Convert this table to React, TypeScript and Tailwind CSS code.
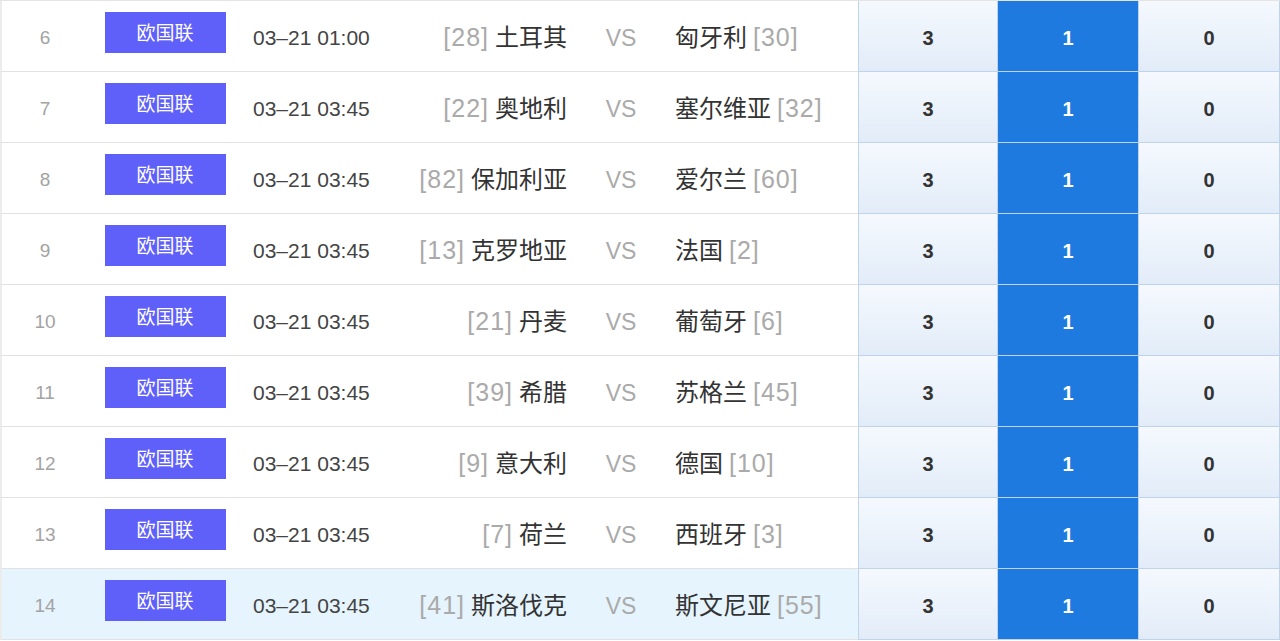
import React from 'react';

interface Match {
  no: number;
  time: string;
  homeRank: number;
  home: string;
  away: string;
  awayRank: number;
}

const matches: Match[] = [
  { no: 6, time: '03–21 01:00', homeRank: 28, home: '土耳其', away: '匈牙利', awayRank: 30 },
  { no: 7, time: '03–21 03:45', homeRank: 22, home: '奥地利', away: '塞尔维亚', awayRank: 32 },
  { no: 8, time: '03–21 03:45', homeRank: 82, home: '保加利亚', away: '爱尔兰', awayRank: 60 },
  { no: 9, time: '03–21 03:45', homeRank: 13, home: '克罗地亚', away: '法国', awayRank: 2 },
  { no: 10, time: '03–21 03:45', homeRank: 21, home: '丹麦', away: '葡萄牙', awayRank: 6 },
  { no: 11, time: '03–21 03:45', homeRank: 39, home: '希腊', away: '苏格兰', awayRank: 45 },
  { no: 12, time: '03–21 03:45', homeRank: 9, home: '意大利', away: '德国', awayRank: 10 },
  { no: 13, time: '03–21 03:45', homeRank: 7, home: '荷兰', away: '西班牙', awayRank: 3 },
  { no: 14, time: '03–21 03:45', homeRank: 41, home: '斯洛伐克', away: '斯文尼亚', awayRank: 55 },
];

const font = { fontFamily: '"Liberation Sans", "Noto Sans CJK SC", sans-serif' };

const App: React.FC = () => {
  return (
    <div className="w-[1280px] h-[641px] bg-white overflow-hidden border-t border-[#e4e4e4]" style={font}>
      {matches.map((m, i) => {
        const active = i === matches.length - 1;
        return (
          <div
            key={m.no}
            className={`flex h-[71px] border-b border-[#e2e2e2] border-l-2 border-l-[#ececec] ${
              active ? 'bg-[#e6f4fd]' : 'bg-white'
            }`}
          >
            <div className="w-[86px] flex items-center justify-center pt-[5px] text-[19px] text-[#a3a3a3]">{m.no}</div>
            <div className="w-[157px] flex items-center justify-center">
              <div className="w-[121px] h-[41px] mt-[-7px] ml-[-3px] pt-[3px] bg-[#5f60fa] text-white text-[19px] flex items-center justify-center">
                欧国联
              </div>
            </div>
            <div className="w-[147px] flex items-center pl-[8px] pt-[4px] text-[21px] text-[#444] whitespace-nowrap">{m.time}</div>
            <div className="w-[185px] flex items-center justify-end pr-[10px] pt-[4px] text-[24px] text-[#333] whitespace-nowrap">
              <span className="text-[#aaa] mr-[6px] text-[25px] tracking-[1px]">[{m.homeRank}]</span>
              {m.home}
            </div>
            <div className="w-[90px] flex items-center justify-center pt-[4px] text-[23px] text-[#aaa] pr-[2px]">VS</div>
            <div className="w-[191px] flex items-center pl-[8px] pt-[4px] text-[24px] text-[#333] whitespace-nowrap">
              {m.away}
              <span className="text-[#aaa] ml-[6px] text-[25px] tracking-[1px]">[{m.awayRank}]</span>
            </div>
            <div className="flex-1 flex -mb-px -mt-px">
              <div className="w-[140px] flex items-center justify-center pt-[4px] border border-[#bfd4ea] bg-gradient-to-b from-[#f5f9fe] to-[#e2ecf8] text-[20px] font-bold text-[#333]">
                3
              </div>
              <div className="w-[140px] flex items-center justify-center pt-[4px] border-y border-[#bfd4ea] bg-[#1f7ae0] text-[20px] font-bold text-white">
                1
              </div>
              <div className="flex-1 flex items-center justify-center pt-[4px] border border-[#bfd4ea] bg-gradient-to-b from-[#f5f9fe] to-[#e2ecf8] text-[20px] font-bold text-[#333]">
                0
              </div>
            </div>
          </div>
        );
      })}
    </div>
  );
};

export default App;
